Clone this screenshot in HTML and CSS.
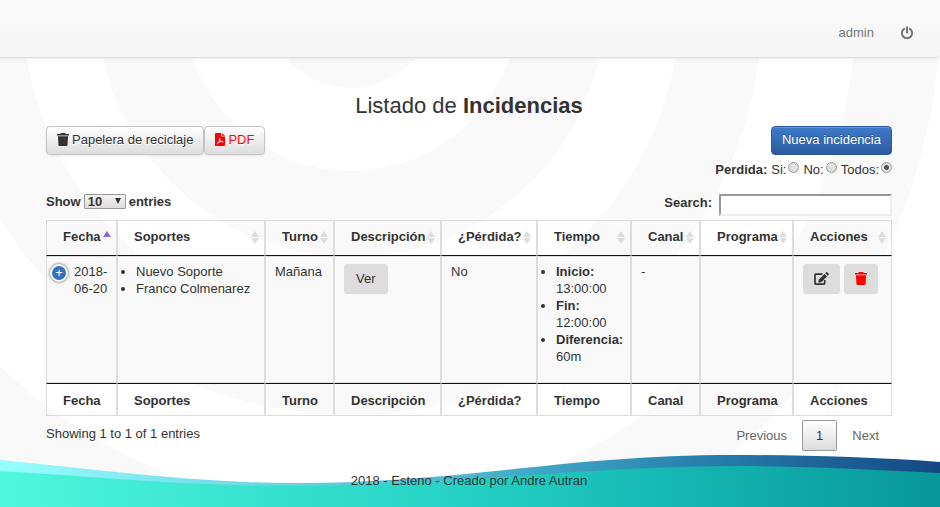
FILE: index.html
```html
<!DOCTYPE html>
<html lang="es">
<head>
<meta charset="utf-8">
<title>Listado de Incidencias</title>
<meta name="viewport" content="width=device-width, initial-scale=1">
<link rel="stylesheet" href="styles.css">
</head>
<body>
<svg class="rings" viewBox="0 0 940 507" preserveAspectRatio="xMidYMin slice" aria-hidden="true">
  <circle cx="351" cy="3" r="590" fill="#f9f9f9"/>
  <circle cx="351" cy="3" r="505" fill="#fff"/>
  <circle cx="351" cy="3" r="412" fill="#f9f9f9"/>
  <circle cx="351" cy="3" r="329" fill="#fff"/>
  <circle cx="351" cy="3" r="254" fill="#f9f9f9"/>
  <circle cx="351" cy="3" r="168" fill="#fff"/>
  <circle cx="351" cy="3" r="85" fill="#f9f9f9"/>
</svg>
<svg class="wave" viewBox="0 0 940 52" preserveAspectRatio="none" aria-hidden="true">
  <defs>
    <linearGradient id="back" x1="0" x2="1" y1="0" y2="0">
      <stop offset="0" stop-color="#98ffff"/>
      <stop offset=".5" stop-color="#4ab6d0"/>
      <stop offset=".75" stop-color="#277fac"/>
      <stop offset="1" stop-color="#144784"/>
    </linearGradient>
    <linearGradient id="front" gradientUnits="userSpaceOnUse" x1="0" y1="52" x2="940" y2="22">
      <stop offset="0" stop-color="#4ff7dc"/>
      <stop offset=".5" stop-color="#24d1c3"/>
      <stop offset=".75" stop-color="#14b3b0"/>
      <stop offset="1" stop-color="#08979b"/>
    </linearGradient>
  </defs>
  <path fill="url(#back)" d="M0 5C100 15 200 28 290 28C470 28 560 0 735 0C800 0 870 2 940 7V52H0Z"/>
  <path fill="url(#front)" d="M0 16C100 22 190 31 290 31C450 31 580 11 740 11C810 11 880 15 940 18V52H0Z"/>
</svg>

<header class="navbar">
  <a class="nav-link" href="#">admin</a>
  <a class="nav-link" href="#" aria-label="Salir">
    <svg class="icon-power" viewBox="0 0 14 14" aria-hidden="true"><path d="M4.2 2.9A5.1 5.1 0 1 0 9.8 2.9" fill="none" stroke="currentColor" stroke-width="2" stroke-linecap="round"/><path d="M7 1.3V6.6" stroke="currentColor" stroke-width="2" stroke-linecap="round"/></svg>
  </a>
</header>

<main class="page">
  <h1 class="title">Listado de <strong>Incidencias</strong></h1>

  <div class="bar">
    <div class="group">
      <button class="btn" type="button"><svg class="icon-trash" viewBox="0 0 12 13" aria-hidden="true"><path fill="currentColor" d="M0 1h3.3L4 0h4l.7 1H12v1.5H0zM.9 3.3h10.2L10.5 12a1 1 0 0 1-1 1h-7a1 1 0 0 1-1-1z"/></svg>Papelera de reciclaje</button>
      <button class="btn danger" type="button"><svg class="icon-pdf" viewBox="0 0 10 13" aria-hidden="true"><path fill="currentColor" d="M0 .8Q0 0 .8 0H6v3.6h4v8.6q0 .8-.8.8H.8q-.8 0-.8-.8zM7 0l3 2.8H7z"/><path d="M1.8 10.8C4 9.6 5 7 4.6 5.2M4.6 5.4C5 7.6 6.3 9 8.3 9.1M2.5 10C4 8.9 6 8.4 8.2 8.5" fill="none" stroke="#fff" stroke-width=".8"/></svg>PDF</button>
    </div>
    <button class="btn primary" type="button">Nueva incidencia</button>
  </div>

  <div class="filters" role="radiogroup" aria-label="Perdida">
    <strong>Perdida:</strong>
    <label>Si:<input type="radio" name="perdida"></label>
    <label>No:<input type="radio" name="perdida"></label>
    <label>Todos:<input type="radio" name="perdida" checked></label>
  </div>

  <div class="controls">
    <label class="length">Show
      <span class="select"><select><option>10</option><option>25</option><option>50</option></select></span>
      entries</label>
    <label class="search">Search:<input type="search"></label>
  </div>

  <table class="grid">
    <colgroup>
      <col class="c-fecha"><col class="c-soportes"><col class="c-turno"><col class="c-desc"><col class="c-perdida"><col class="c-tiempo"><col class="c-canal"><col class="c-programa"><col class="c-acciones">
    </colgroup>
    <thead>
      <tr><th class="asc">Fecha</th><th>Soportes</th><th>Turno</th><th>Descripción</th><th>¿Pérdida?</th><th>Tiempo</th><th>Canal</th><th>Programa</th><th>Acciones</th></tr>
    </thead>
    <tbody>
      <tr>
        <td class="date"><button class="expand" type="button">+</button>2018-06-20</td>
        <td><ul><li>Nuevo Soporte</li><li>Franco Colmenarez</li></ul></td>
        <td>Mañana</td>
        <td><div class="actions"><button class="flat" type="button">Ver</button></div></td>
        <td>No</td>
        <td><ul><li><b>Inicio:</b> 13:00:00</li><li><b>Fin:</b> 12:00:00</li><li><b>Diferencia:</b> 60m</li></ul></td>
        <td>-</td>
        <td></td>
        <td><div class="actions">
          <button class="flat" type="button" aria-label="Editar"><svg class="icon-edit" viewBox="0 0 15 13" aria-hidden="true"><path d="M8.5 2.2H1.9Q1 2.2 1 3.1V11.2Q1 12.1 1.9 12.1H9.8Q10.7 12.1 10.7 11.2V8" fill="none" stroke="currentColor" stroke-width="1.7"/><path fill="currentColor" d="M10.600 1.900l2.500 2.500L7.200 10.200l-2.900.4.400-2.900zM11.300 1.200l.9-.9q.5-.5 1 0l1.500 1.500q.5.5 0 1l-.9.9z"/></svg></button>
          <button class="flat danger" type="button" aria-label="Eliminar"><svg class="icon-trash" viewBox="0 0 12 13" aria-hidden="true"><path fill="currentColor" d="M0 1h3.300L4 0h4l.7 1H12v1.500H0zM.9 3.300h10.200L10.500 12a1 1 0 0 1-1 1h-7a1 1 0 0 1-1-1z"/></svg></button>
        </div></td>
      </tr>
    </tbody>
    <tfoot>
      <tr><th>Fecha</th><th>Soportes</th><th>Turno</th><th>Descripción</th><th>¿Pérdida?</th><th>Tiempo</th><th>Canal</th><th>Programa</th><th>Acciones</th></tr>
    </tfoot>
  </table>

  <div class="summary">
    <span class="info">Showing 1 to 1 of 1 entries</span>
    <nav class="pager" aria-label="Paginación">
      <a href="#">Previous</a><a class="current" href="#">1</a><a href="#">Next</a>
    </nav>
  </div>
</main>

<footer class="footer">2018 - Esteno - Creado por Andre Autran</footer>
</body>
</html>
```
FILE: styles.css
```css
* { box-sizing: border-box; }

body {
  position: relative;
  display: flex;
  flex-direction: column;
  min-height: 100vh;
  margin: 0;
  overflow-x: hidden;
  background: #fff;
  color: #333;
  font: 13px/17px "Liberation Sans", Arial, sans-serif;
}

button, input, select { font: inherit; color: inherit; margin: 0; }

/* Page decoration */
.rings {
  position: absolute;
  inset: 0;
  z-index: -2;
  width: 100%;
  height: 100%;
}
.wave {
  position: absolute;
  left: 0;
  bottom: 0;
  z-index: -1;
  width: 100%;
  height: 52px;
}

/* Top bar */
.navbar {
  display: flex;
  justify-content: flex-end;
  align-items: center;
  gap: 26px;
  padding: 24px 26px 16px;
  border-bottom: 1px solid #dfdfdf;
  border-radius: 0 0 4px 0;
  background: linear-gradient(#fafafa, #f6f6f6);
  box-shadow: 0 1px 4px rgba(0, 0, 0, .07);
}
.nav-link { color: #777; text-decoration: none; }
.icon-power { display: block; width: 14px; height: 14px; }

.page { padding: 0 48px 0 46px; }

.title {
  margin: 36px 0 9px;
  font-size: 22px;
  font-weight: normal;
  line-height: 23px;
  text-align: center;
}

.bar { display: flex; justify-content: space-between; }
.group { display: flex; }

.btn {
  display: flex;
  gap: 3px;
  padding: 4px 10px 6px;
  border: 1px solid #c5c5c5;
  border-radius: 4px;
  background: linear-gradient(#fff, #ddd);
  box-shadow: 0 1px 2px rgba(0, 0, 0, .08);
  text-shadow: 0 1px 0 #fff;
}
.btn svg { margin-top: 2px; }
.danger { color: #f00; }
.primary {
  border-color: #2a5a9e;
  background: linear-gradient(#3e7bcb, #2a5d9f);
  box-shadow: inset 0 1px 0 rgba(255, 255, 255, .2);
  color: #fff;
  text-shadow: 0 -1px 0 rgba(0, 0, 0, .25);
}
.icon-trash { width: 12px; height: 13px; vertical-align: -2px; }
.icon-pdf { width: 10px; height: 13px; vertical-align: -2px; }

.filters {
  display: flex;
  justify-content: flex-end;
  gap: 4px;
  margin-top: 6px;
}
.filters label { display: flex; gap: 2px; }
.filters input {
  appearance: none;
  width: 11px;
  height: 11px;
  margin-top: 1px;
  border: 1px solid #999;
  border-radius: 50%;
  background: linear-gradient(#e4e4e4, #ddd);
}
.filters input:checked {
  background: radial-gradient(circle, #555 2px, #e2e2e2 3px);
}

.controls {
  display: flex;
  justify-content: space-between;
  align-items: flex-start;
  margin: 16px 0 4px;
  font-weight: bold;
}
.length { display: flex; gap: 3px; line-height: 15px; }
.select { position: relative; }
.select::after {
  content: "";
  position: absolute;
  top: 4px;
  right: 5px;
  border: solid transparent;
  border-width: 6px 3px 0;
  border-top-color: #333;
  pointer-events: none;
}
.select select {
  appearance: none;
  display: block;
  width: 42px;
  height: 15px;
  padding: 0 3px;
  border: 1px solid #999;
  border-radius: 1px;
  background: linear-gradient(#f5f5f5, #ddd);
  line-height: 13px;
}
.search { display: flex; gap: 7px; }
.search input {
  appearance: none;
  width: 173px;
  height: 22px;
  border: 2px solid #eee;
  border-top-color: #999;
  border-left-color: #999;
  background: #fff;
}

/* Data table */
.grid {
  width: 100%;
  border-collapse: separate;
  border-spacing: 0;
  table-layout: fixed;
}
.c-fecha { width: 71px; }
.c-soportes { width: 148px; }
.c-turno, .c-canal { width: 69px; }
.c-desc { width: 107px; }
.c-perdida { width: 96px; }
.c-tiempo { width: 94px; }
.c-programa { width: 93px; }
.c-acciones { width: 99px; }

.grid th, .grid td { border: 1px solid #ddd; text-align: left; }
.grid thead th {
  position: relative;
  padding: 7px 0 10px 16px;
  border-bottom-color: #111;
}
.grid tfoot th {
  padding: 8px 0 6px 16px;
  border-top-color: #111;
}
.grid thead th::before,
.grid thead th::after {
  content: "";
  position: absolute;
  right: 5px;
  border: solid transparent;
}
.grid thead th::before { top: 10px; border-width: 0 4px 6px; border-bottom-color: #ddd; }
.grid thead th::after { top: 17px; border-width: 6px 4px 0; border-top-color: #ddd; }
.grid thead .asc::before { border-bottom-color: #8a63de; }
.grid thead .asc::after { display: none; }

.grid td {
  padding: 6px 9px;
  background: #f9f9f9;
  vertical-align: top;
}
.grid ul { margin: 0 0 11px; padding-left: 9px; }
.grid .date { position: relative; padding-right: 6px; padding-left: 27px; }
.expand {
  position: absolute;
  top: 7px;
  left: 3px;
  width: 18px;
  height: 18px;
  padding: 0;
  border: 2px solid #fff;
  border-radius: 50%;
  background: #3170bc;
  box-shadow: 0 0 3px #444;
  color: #fff;
  line-height: 12px;
}
.flat {
  padding: 6px 12px 7px;
  border: 0;
  border-radius: 3px;
  background: #ddd;
}
.actions { display: flex; gap: 4px; padding-top: 1px; }
.flat[aria-label] { padding: 6px 11px 7px; }
.icon-edit { width: 15px; height: 13px; vertical-align: -2px; }

.summary {
  display: flex;
  justify-content: space-between;
  align-items: flex-start;
  padding-top: 4px;
}
.info { padding-top: 5px; }
.pager { display: flex; gap: 1px; }
.pager a {
  padding: 6px 13px;
  border: 1px solid transparent;
  border-radius: 2px;
  color: #666;
  text-decoration: none;
}
.pager a:last-child { padding-right: 12px; }
.pager .current {
  border-color: #979797;
  background: linear-gradient(#fff, #dcdcdc);
  color: #333;
}

.footer {
  margin-top: auto;
  padding: 20px 48px 18px 46px;
  text-align: center;
}
```
